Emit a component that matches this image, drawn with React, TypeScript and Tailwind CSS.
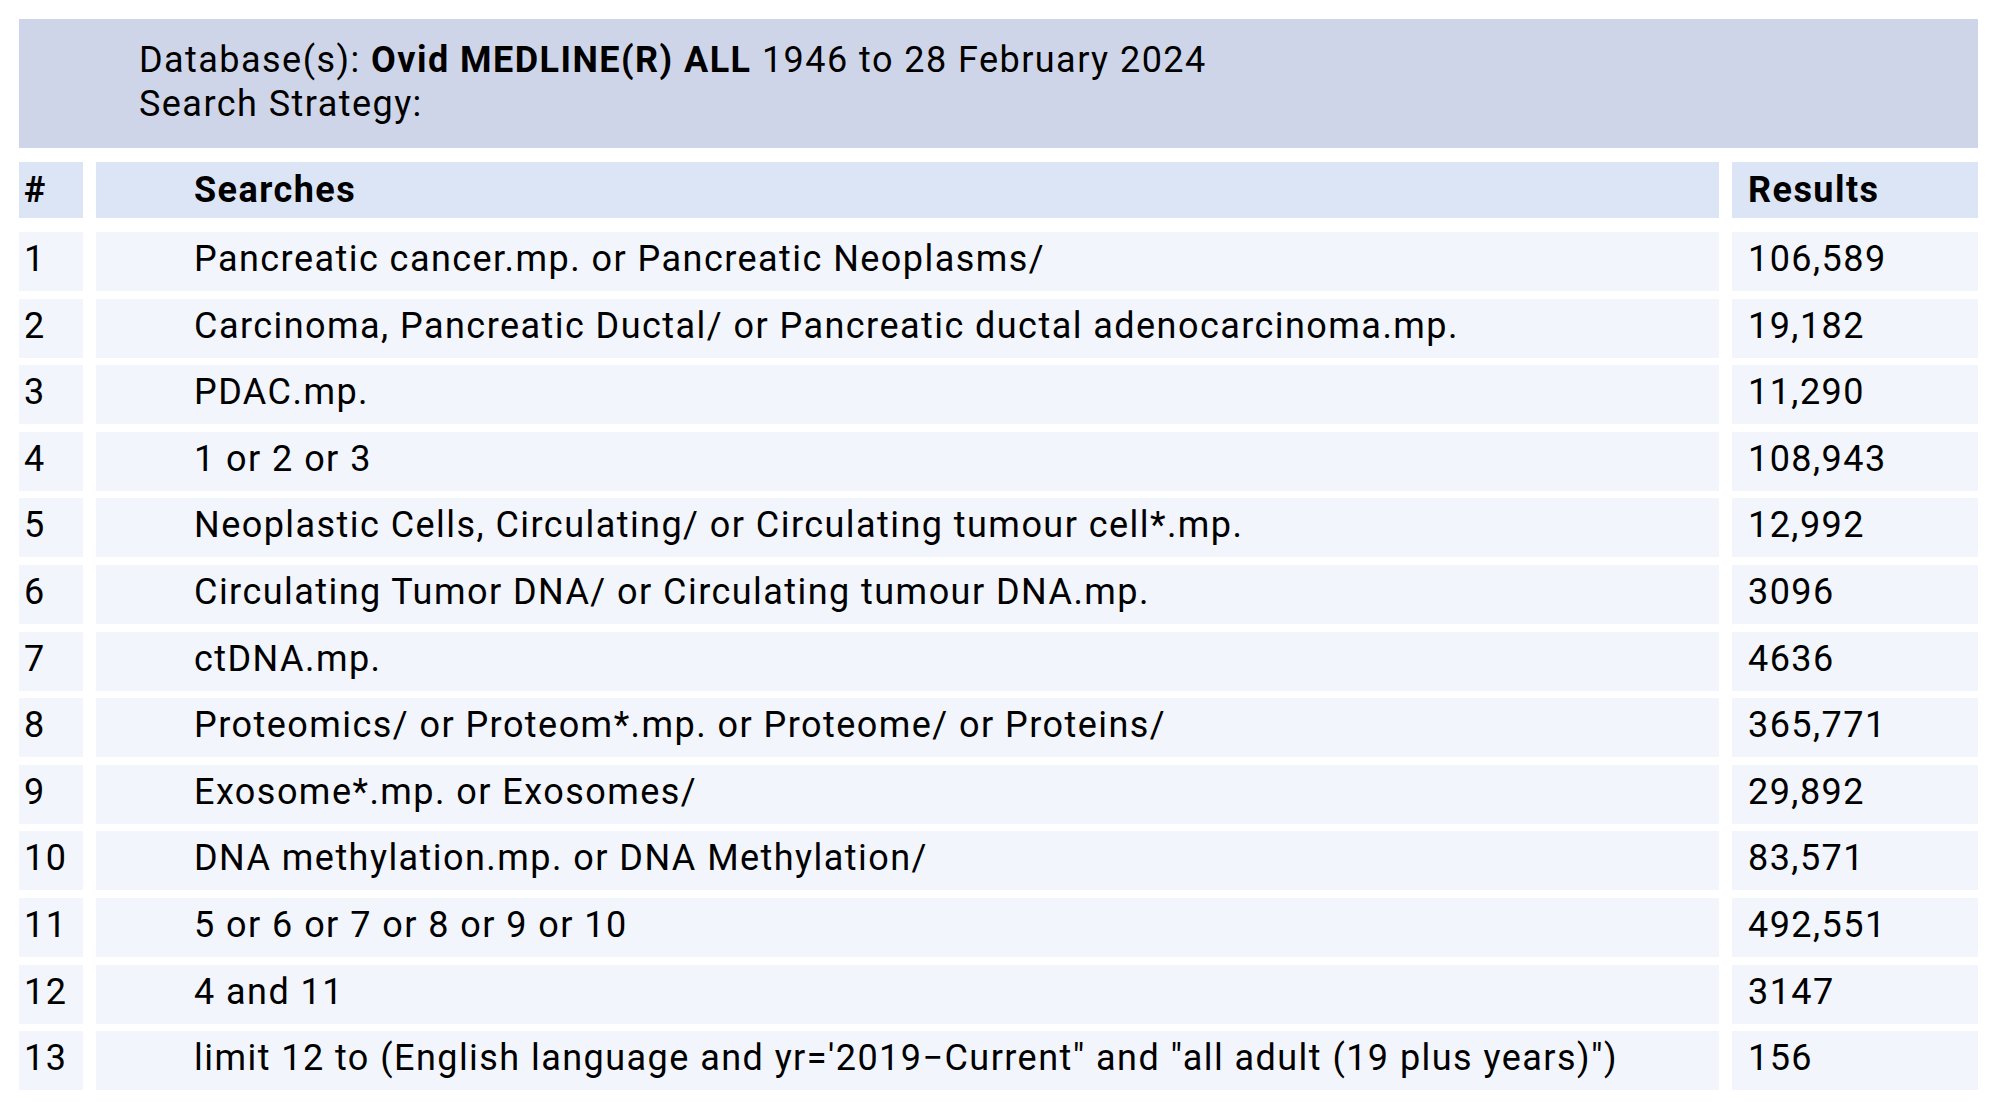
const rows: [string, string, string][] = [
  ["1", "Pancreatic cancer.mp. or Pancreatic Neoplasms/", "106,589"],
  ["2", "Carcinoma, Pancreatic Ductal/ or Pancreatic ductal adenocarcinoma.mp.", "19,182"],
  ["3", "PDAC.mp.", "11,290"],
  ["4", "1 or 2 or 3", "108,943"],
  ["5", "Neoplastic Cells, Circulating/ or Circulating tumour cell*.mp.", "12,992"],
  ["6", "Circulating Tumor DNA/ or Circulating tumour DNA.mp.", "3096"],
  ["7", "ctDNA.mp.", "4636"],
  ["8", "Proteomics/ or Proteom*.mp. or Proteome/ or Proteins/", "365,771"],
  ["9", "Exosome*.mp. or Exosomes/", "29,892"],
  ["10", "DNA methylation.mp. or DNA Methylation/", "83,571"],
  ["11", "5 or 6 or 7 or 8 or 9 or 10", "492,551"],
  ["12", "4 and 11", "3147"],
  ["13", "limit 12 to (English language and yr='2019\u2212Current\" and \"all adult (19 plus years)\")", "156"],
];

const App = () => {
  return (
    <div className="min-h-screen bg-white pt-[19px] pl-[19px] pr-[22px] font-['Roboto',sans-serif] text-[36px] tracking-[1.45px] text-black">
      <div className="h-[129px] bg-[#cfd5e8] pl-[120px] pt-[19px] leading-[44px]">
        <div>
          Database(s): <b className="font-bold">Ovid MEDLINE(R) ALL</b> 1946 to 28 February 2024
        </div>
        <div>Search Strategy:</div>
      </div>

      <div className="mt-[14px] flex flex-col gap-[14px]">
        <div className="grid h-[56px] grid-cols-[64px_1fr_246px] gap-x-[13px] font-bold">
          <div className="flex items-center bg-[#dce5f6] pl-[5px]">#</div>
          <div className="flex items-center bg-[#dce5f6] pl-[98px]">Searches</div>
          <div className="flex items-center bg-[#dce5f6] pl-[16px]">Results</div>
        </div>
        {rows.map(([n, q, r]) => (
          <div key={n} className="grid h-[52.6px] grid-cols-[64px_1fr_246px] gap-x-[13px]">
            <div className="flex items-center bg-[#f2f5fb] pb-[5px] pl-[5px]">{n}</div>
            <div className="flex items-center bg-[#f2f5fb] pb-[5px] pl-[98px] whitespace-nowrap">{q}</div>
            <div className="flex items-center bg-[#f2f5fb] pb-[5px] pl-[16px]">{r}</div>
          </div>
        ))}
      </div>
    </div>
  );
};

export default App;
